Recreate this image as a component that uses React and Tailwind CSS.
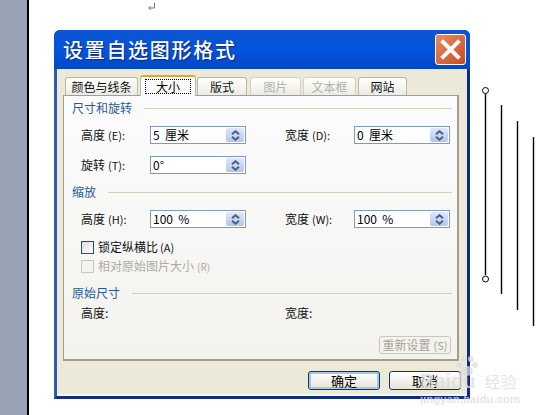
const F = { fontFamily: '"Noto Sans CJK SC","Liberation Sans",sans-serif' };
const L = { fontFamily: '"Liberation Sans",sans-serif' };

function Spin({ value }) {
  return (
    <div className="flex w-[96px] h-[18px] items-stretch border border-[#7f9db9] bg-white">
      <span className="flex-1 h-[16px] overflow-hidden pl-[2px] text-[12px] leading-[16px] text-black whitespace-pre">{value}</span>
      <span className="m-[1px] flex w-[18px] flex-col items-center justify-center gap-[1px] rounded-[2px] bg-gradient-to-b from-[#dfe8fb] to-[#b3c6f0]">
        <svg width="9" height="5" viewBox="0 0 9 5"><path d="M1 4.2 4.5 1.2 8 4.2" fill="none" stroke="#4d6185" strokeWidth="2" /></svg>
        <svg width="9" height="5" viewBox="0 0 9 5"><path d="M1 .8 4.5 3.8 8 .8" fill="none" stroke="#4d6185" strokeWidth="2" /></svg>
      </span>
    </div>
  );
}

function Label({ children, hint, w = "w-[69px]" }) {
  return (
    <span className={`${w} h-[18px] text-[12px] leading-[18px] text-[#111] whitespace-nowrap`}>
      {children}
      {hint && <span className="ml-[3px] text-[11px] leading-none">{hint}</span>}
    </span>
  );
}

function Section({ title, line }) {
  return (
    <div className="flex items-center h-[18px]">
      <span className={`${line} text-[12px] leading-[18px] text-[#2a5a8f] whitespace-nowrap`}>{title}</span>
      <span className="flex-1 h-px bg-[#d0d0bf]" />
    </div>
  );
}

function Tab({ w, label, active, disabled, ml }) {
  return (
    <div
      className={`${w} ${ml} flex items-center justify-center text-[12px] rounded-t-[3px] border border-b-0 ${
        active
          ? "h-[21px] relative top-px z-10 border-[#b9b9a8] border-t-[#e8a33d] border-t-2 bg-[#fcfcfe] text-black"
          : "h-[18px] bg-gradient-to-b from-white to-[#ecebe3]"
      } ${active ? "" : disabled ? "text-[#b5b3a6] border-[#d5d2c4]" : "text-[#111] border-[#b9b9a8]"}`}
    >
      {active ? <span className="border border-dotted border-black w-[46px] h-[15px] flex items-center justify-center leading-none">{label}</span> : label}
    </div>
  );
}

function Btn({ children, ok, ml }) {
  return (
    <div className={`${ml} w-[72px] h-[19px] flex items-center justify-center rounded-[3px] border border-[#003c74] bg-gradient-to-b from-white to-[#e6e3d6] text-[13px] text-black ${ok ? "shadow-[inset_0_0_0_2px_#a9c5ec]" : ""}`}>
      {children}
    </div>
  );
}

export default function App() {
  return (
    <div className="relative flex w-[546px] h-[415px] overflow-hidden bg-white" style={F}>
      <div className="w-[29px] h-full bg-[#9aa2b6] border-r-2 border-black shrink-0" />
      <div className="ml-[25px] mt-[30px] w-[416px] h-[369px] flex flex-col rounded-t-[6px] bg-[#0a3fb8] border-l-[3px] border-r-[3px] border-b-[3px] border-l-[#2a5db0] border-r-[#0b2c80] border-b-[#0f2f7c] shrink-0">
        <div className="h-[39px] shrink-0 -mx-[3px] flex items-center justify-between pl-[9px] pr-[4px] rounded-t-[6px] bg-gradient-to-b from-[#0d55cf] via-[#0553e0] to-[#0348c4]">
          <span className="text-[20px] font-medium tracking-[1.7px] leading-none text-white [text-shadow:1px_1px_1px_#0a2a78]">设置自选图形格式</span>
          <span className="flex w-[31px] h-[31px] items-center justify-center rounded-[3px] border border-white bg-gradient-to-br from-[#e88a62] to-[#c94a20]">
            <svg width="21" height="21" viewBox="0 0 21 21"><path d="M3 3 18 18M18 3 3 18" stroke="#fff" strokeWidth="4" strokeLinecap="square" /></svg>
          </span>
        </div>
        <div className="flex-1 min-h-0 flex flex-col bg-[#ece9d8] px-[6px] border-b-2 border-[#f4f6ff]">
          <div className="flex h-[26px] shrink-0 items-end pl-[2px]">
            <Tab w="w-[73px]" label="颜色与线条" />
            <Tab w="w-[56px]" label="大小" active ml="ml-[2px]" />
            <Tab w="w-[50px]" label="版式" ml="ml-px" />
            <Tab w="w-[51px]" label="图片" disabled ml="ml-[3px]" />
            <Tab w="w-[53px]" label="文本框" disabled ml="ml-[2px]" />
            <Tab w="w-[49px]" label="网站" ml="ml-[2px]" />
          </div>
          <div className="w-[396px] h-[266px] shrink-0 flex flex-col border border-[#a0a090] border-b-2 border-r-2 bg-gradient-to-b from-[#fcfcfe] to-[#f3f2ed] pl-[8px] pr-[5px]">
            <div className="mt-[3px]"><Section title="尺寸和旋转" line="w-[72px]" /></div>
            <div className="mt-[9px] flex h-[18px] items-center pl-[9px]">
              <Label hint="(E):">高度</Label><Spin value="5  厘米" />
              <span className="w-[39px]" /><Label hint="(D):">宽度</Label><Spin value="0  厘米" />
            </div>
            <div className="mt-[12px] flex h-[18px] items-center pl-[9px]">
              <Label hint="(T):">旋转</Label><Spin value="0°" />
            </div>
            <div className="mt-[9px]"><Section title="缩放" line="w-[36px]" /></div>
            <div className="mt-[9px] flex h-[18px] items-center pl-[9px]">
              <Label hint="(H):">高度</Label><Spin value="100  %" />
              <span className="w-[39px]" /><Label hint="(W):">宽度</Label><Spin value="100  %" />
            </div>
            <div className="mt-[12px] flex items-center pl-[9px] h-[14px]">
              <span className="w-[13px] h-[13px] border border-[#1c5180] bg-gradient-to-br from-[#dcdcd7] to-white" />
              <span className="ml-[4px] text-[12px] text-[#111] leading-none">锁定纵横比<span className="ml-[2px] text-[11px]">(A)</span></span>
            </div>
            <div className="mt-[5px] flex items-center pl-[9px] h-[14px]">
              <span className="w-[13px] h-[13px] border border-[#cac8bb] bg-[#f3f2ed]" />
              <span className="ml-[4px] text-[12px] text-[#aeaca0] leading-none">相对原始图片大小<span className="ml-[3px] text-[10px]">(R)</span></span>
            </div>
            <div className="mt-[11px]"><Section title="原始尺寸" line="w-[60px]" /></div>
            <div className="mt-[2px] flex items-center pl-[9px] h-[18px]">
              <Label w="w-[204px]">高度:</Label><Label>宽度:</Label>
            </div>
            <div className="mt-[14px] ml-auto mr-[1px] w-[72px] h-[18px] flex items-center justify-center rounded-[3px] border border-[#c9c7ba] text-[12px] leading-none text-[#a7a598]">重新设置<span className="ml-[3px] text-[11px]">(S)</span></div>
          </div>
          <div className="flex mt-[10px] pl-[245px]">
            <Btn ok>确定</Btn>
            <Btn ml="ml-[9px]">取消</Btn>
          </div>
        </div>
      </div>

      {/* selected line shape and free-standing lines on the document canvas */}
      <svg className="absolute left-0 top-0 pointer-events-none" width="546" height="415" viewBox="0 0 546 415">
        <path d="M150.5 8h-1.8m0 0 2-1.6m-2 1.6 2 1.6M154.5 3v5h-4" fill="none" stroke="#777" strokeWidth="1" />
        <path d="M485.5 94v181M501.5 105v189M517.5 121v189M533.5 137v189" stroke="#000" strokeWidth="1.4" fill="none" />
        <circle cx="485.5" cy="90.5" r="3" fill="#fff" stroke="#000" />
        <circle cx="485.5" cy="279" r="3" fill="#fff" stroke="#000" />
      </svg>

      {/* watermark */}
      <div className="absolute left-[420px] top-[371px] text-[#dedede]/80 leading-none pointer-events-none">
        <div className="flex items-center text-[20px] font-bold" style={L}>
          <span>Baidu</span>
          <span className="ml-[9px] text-[16px] font-normal" style={F}>经验</span>
        </div>
        <div className="mt-[3px] text-[11px] font-bold tracking-[.2px]" style={L}>jingyan.baidu.com</div>
      </div>
      <svg className="absolute left-[455px] top-[355px] pointer-events-none" width="24" height="22" viewBox="0 0 24 22">
        <g fill="#dedede" fillOpacity=".75">
          <circle cx="4" cy="10" r="3" /><circle cx="9" cy="4" r="3" /><circle cx="16" cy="4" r="3" /><circle cx="20" cy="10" r="3" />
          <ellipse cx="12" cy="16" rx="6" ry="5" />
        </g>
      </svg>
    </div>
  );
}
